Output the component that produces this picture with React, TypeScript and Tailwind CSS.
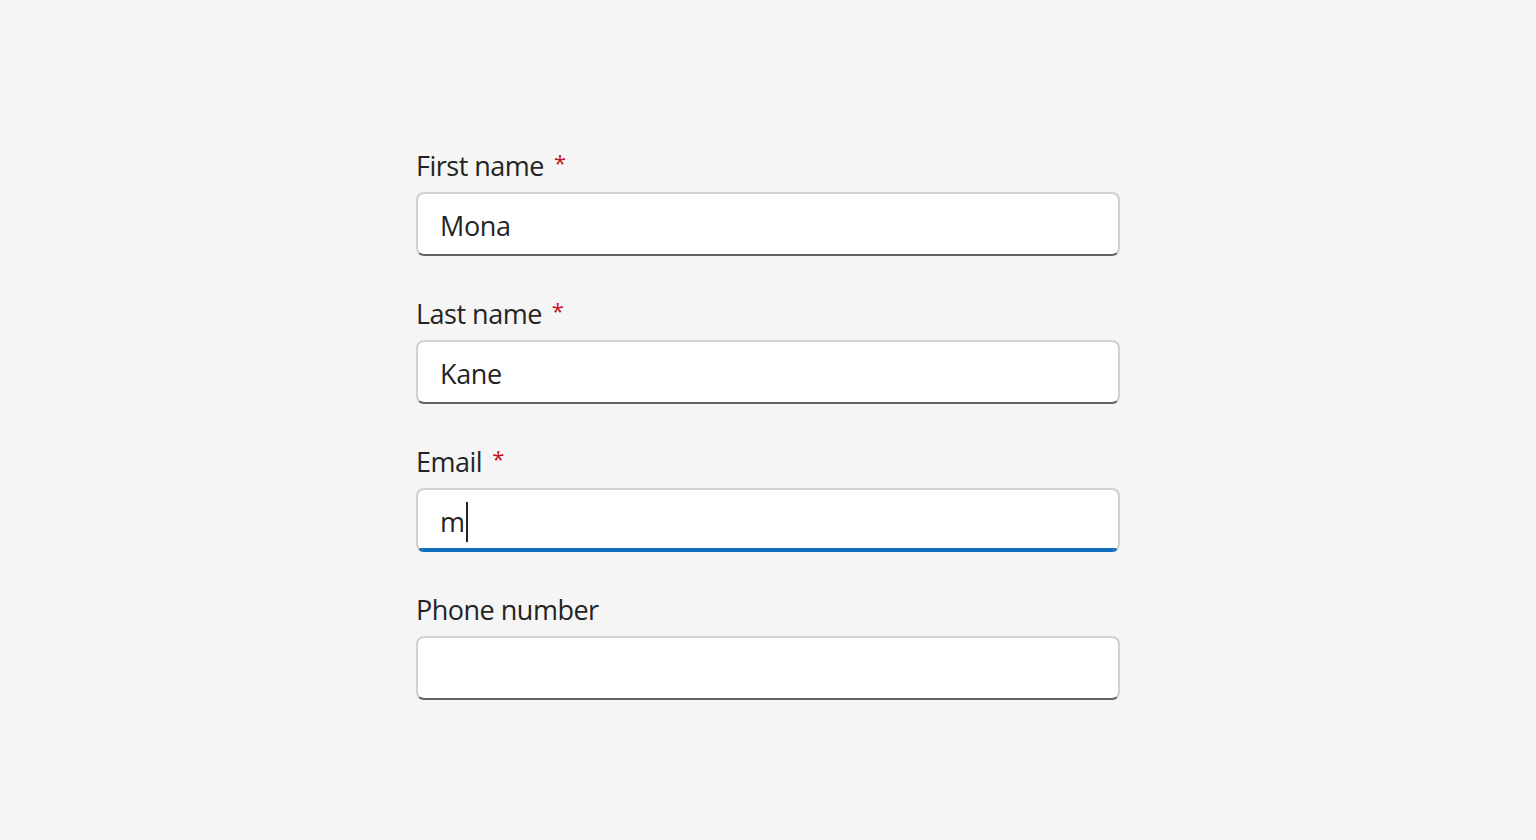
import React from "react";

function Field({ label, required, value, focused }: { label: string; required?: boolean; value?: string; focused?: boolean }) {
  return (
    <div className="flex flex-col gap-[4px]">
      <div className="flex h-[40px] items-center pb-[4px] text-[27px] leading-[40px] tracking-[-0.5px] text-[#242424]">
        <span>{label}</span>
        {required && <span className="pl-[10px] text-[22px] leading-[22px] mb-[8px] text-[#c50f1f]">*</span>}
      </div>
      <div
        className={
          focused
            ? "relative h-[64px] overflow-hidden rounded-[8px] border-2 border-[#d1d1d1] border-b-[#0f6cbd] bg-white"
            : "relative h-[64px] overflow-hidden rounded-[8px] border-2 border-[#d1d1d1] border-b-[#616161] bg-white"
        }
      >
        <div className="flex h-full items-center pl-[22px] pt-[4px] text-[27px] tracking-[-0.4px] text-[#242424]">
          {value}
          {focused && <span className="ml-[1px] inline-block h-[40px] w-[2px] bg-[#242424]" />}
        </div>
        {focused && <div className="absolute bottom-0 left-0 right-0 h-[2px] bg-[#0f6cbd]" />}
      </div>
    </div>
  );
}

export default function App() {
  return (
    <div className="min-h-[840px] w-full bg-[#f5f5f5] pt-[148px]" style={{ fontFamily: '"Open Sans", "Noto Sans", sans-serif' }}>
      <div className="mx-auto flex w-[704px] flex-col gap-[40px]">
        <Field label="First name" required value="Mona" />
        <Field label="Last name" required value="Kane" />
        <Field label="Email" required value="m" focused />
        <Field label="Phone number" />
      </div>
    </div>
  );
}
